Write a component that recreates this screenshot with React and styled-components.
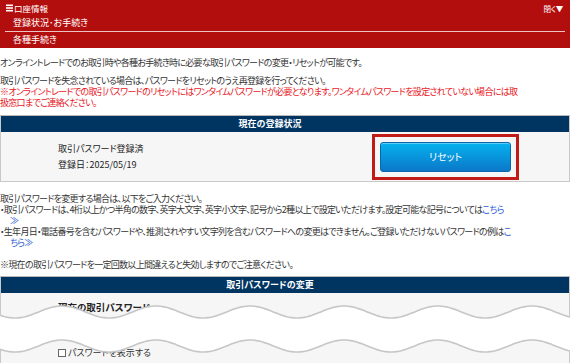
import React from 'react';
import styled, { createGlobalStyle } from 'styled-components';

const GlobalStyle = createGlobalStyle`
  html, body {
    margin: 0;
    padding: 0;
    background: #fff;
    overflow: hidden;
  }
  body {
    font-family: "Noto Sans CJK JP", "Noto Sans", sans-serif;
    font-feature-settings: "palt";
    color: #333;
    font-size: 9.5px;
  }
`;

const Page = styled.div`
  position: relative;
  width: 570px;
  height: 363px;
  overflow: hidden;
`;

const Header = styled.div`
  background: #b30e0e;
  color: #fff;
  padding-bottom: 1px;
`;

const TopRow = styled.div`
  display: flex;
  align-items: center;
  justify-content: space-between;
  height: 16px;
  padding: 0 7px 0 6px;
  font-size: 8.5px;
`;

const MenuTitle = styled.div`
  display: flex;
  align-items: center;
  gap: 1px;
`;

const Toggle = styled.span`
  font-size: 7.5px;
  letter-spacing: -0.2px;
`;

const SubRow = styled.div`
  height: 14px;
  line-height: 13px;
  padding-left: 13px;
  font-size: 9px;
`;

const Divider = styled.div`
  margin: 1px 5px 1px;
  border-top: 1px solid rgba(255, 255, 255, 0.75);
`;

const Lead = styled.div`
  margin-top: ${(p) => p.$top}px;
  line-height: 11px;
  font-size: 9px;
  white-space: nowrap;
  letter-spacing: -0.7px;
`;

const Para = styled.p`
  margin: ${(p) => p.$before || 0}px 0 ${(p) => p.$gap || 0}px;
  color: ${(p) => (p.$red ? '#e8141c' : '#333')};
`;

const Bullet = styled.p`
  margin: 0;
  padding-left: 10px;
  text-indent: -10px;
`;

const Link = styled.span`
  color: #2a5bd7;
`;

const Panel = styled.section`
  margin-top: ${(p) => p.$top}px;
  width: 568px;
  border: 1px solid #c9c9c9;
  border-top-color: #b8b8b8;
`;

const PanelTitle = styled.div`
  height: 16px;
  line-height: 16px;
  background: #003562;
  color: #fff;
  font-weight: bold;
  text-align: center;
  font-size: 9px;
  padding-right: 30px;
`;

const StatusBody = styled.div`
  display: flex;
  align-items: center;
  height: 49px;
  background: #f6f6f6;
`;

const Info = styled.div`
  flex: 1;
  padding-left: 57px;
  line-height: 16px;
  font-size: 9px;
  color: #222;
`;

const Highlight = styled.div`
  margin-right: 50px;
  padding: 5px;
  border: 3px solid #c11b17;
`;

const ResetButton = styled.button`
  display: block;
  width: 131px;
  height: 30px;
  border: 1px solid #0a67b0;
  border-radius: 3px;
  background: linear-gradient(#05b2ef, #0b78c8);
  color: #fff;
  font-family: inherit;
  font-feature-settings: "palt";
  font-size: 10px;
  box-shadow: inset 0 1px 0 rgba(255, 255, 255, 0.35);
`;

const FormBody = styled.div`
  background: #f6f6f6;
  padding: 8px 0 20px 57px;
  display: flex;
  flex-direction: column;
  gap: 8px;
`;

const FieldLabel = styled.div`
  font-weight: bold;
  font-size: 9.5px;
  color: #222;
  line-height: 12px;
`;

const FieldInput = styled.div`
  width: 160px;
  height: 16px;
  border: 1px solid #aaa;
  background: #fff;
`;

const CheckRow = styled.label`
  display: flex;
  align-items: center;
  gap: 2px;
  font-size: 9px;
  color: #333;
  line-height: 12px;
`;

const Box = styled.span`
  width: 6px;
  height: 6px;
  border: 1px solid #666;
  background: #fff;
`;

const Tear = styled.svg`
  position: absolute;
  left: 0;
  top: 0;
  pointer-events: none;
`;

const wave = (offset) => {
  const pts = [];
  for (let x = -2; x <= 572; x += 2) {
    const y = 312 + offset - 6 * Math.cos((2 * Math.PI * (x - 250)) / 94);
    pts.push([x, y.toFixed(2)]);
  }
  return pts;
};

const TearOverlay = () => {
  const top = wave(0);
  const bottom = wave(34);
  const topD = 'M' + top.map((p) => p.join(',')).join(' L');
  const bottomD = 'M' + bottom.map((p) => p.join(',')).join(' L');
  const fillD =
    topD + ' L' + bottom.slice().reverse().map((p) => p.join(',')).join(' L') + ' Z';
  return (
    <Tear width="570" height="363" viewBox="0 0 570 363">
      <path d={fillD} fill="#fff" />
      <path d={topD} fill="none" stroke="#c6c6c6" strokeWidth="1.6" />
      <path d={bottomD} fill="none" stroke="#c6c6c6" strokeWidth="1.6" />
    </Tear>
  );
};

const Burger = () => (
  <svg width="7" height="8" viewBox="0 0 7 8">
    <rect x="0" y="0.5" width="7" height="1.6" fill="#fff" />
    <rect x="0" y="3.2" width="7" height="1.6" fill="#fff" />
    <rect x="0" y="5.9" width="7" height="1.6" fill="#fff" />
  </svg>
);

export default function App() {
  return (
    <Page>
      <GlobalStyle />
      <Header>
        <TopRow>
          <MenuTitle>
            <Burger />
            <span>口座情報</span>
          </MenuTitle>
          <Toggle>閉く▼</Toggle>
        </TopRow>
        <SubRow>登録状況･お手続き</SubRow>
        <Divider />
        <SubRow>各種手続き</SubRow>
      </Header>

      <Lead $top={9}>
        <Para $gap={7}>
          オンライントレードでのお取引時や各種お手続き時に必要な取引パスワードの変更・リセットが可能です。
        </Para>
        <Para>取引パスワードを失念されている場合は、パスワードをリセットのうえ再登録を行ってください。</Para>
        <Para $red>
          ※オンライントレードでの取引パスワードのリセットにはワンタイムパスワードが必要となります。ワンタイムパスワードを設定されていない場合には取
          <br />
          扱窓口までご連絡ください。
        </Para>
      </Lead>

      <Panel $top={7}>
        <PanelTitle>現在の登録状況</PanelTitle>
        <StatusBody>
          <Info>
            <div>取引パスワード登録済</div>
            <div>登録日：2025/05/19</div>
          </Info>
          <Highlight>
            <ResetButton type="button">リセット</ResetButton>
          </Highlight>
        </StatusBody>
      </Panel>

      <Lead $top={11}>
        <Para>取引パスワードを変更する場合は、以下をご入力ください。</Para>
        <Bullet>
          ・取引パスワードは、4桁以上かつ半角の数字、英字大文字、英字小文字、記号から2種以上で設定いただけます。設定可能な記号については<Link>こちら</Link>
          <br />
          <Link>≫</Link>
        </Bullet>
        <Bullet>
          ・生年月日・電話番号を含むパスワードや、推測されやすい文字列を含むパスワードへの変更はできません。ご登録いただけないパスワードの例は<Link>こ</Link>
          <br />
          <Link>ちら≫</Link>
        </Bullet>
        <Para $before={11}>
          ※現在の取引パスワードを一定回数以上間違えると失効しますのでご注意ください。
        </Para>
      </Lead>

      <Panel $top={6}>
        <PanelTitle>取引パスワードの変更</PanelTitle>
        <FormBody>
          <FieldLabel>現在の取引パスワード</FieldLabel>
          <FieldInput />
          <CheckRow>
            <Box />
            パスワードを表示する
          </CheckRow>
        </FormBody>
      </Panel>

      <TearOverlay />
    </Page>
  );
}
